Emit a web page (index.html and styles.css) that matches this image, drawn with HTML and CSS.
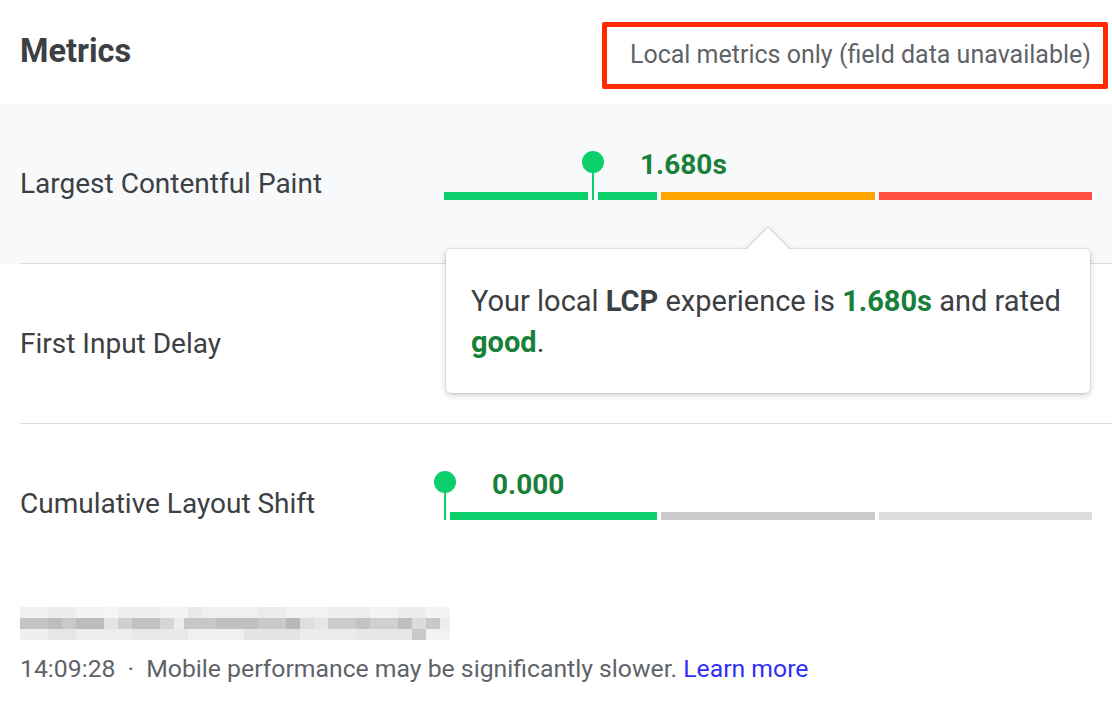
FILE: index.html
```html
<!DOCTYPE html>
<html lang="en">
<head>
<meta charset="utf-8">
<title>Metrics</title>
<link rel="stylesheet" href="styles.css">
</head>
<body>
<header class="head">
  <h1 class="title">Metrics</h1>
  <div class="note">Local metrics only (field data unavailable)</div>
</header>

<section class="metrics">
  <div class="row active">
    <div class="row-inner">
      <div class="label">Largest Contentful Paint</div>
      <div class="chart">
        <div class="bar">
          <span class="seg good"></span>
          <span class="seg ni"></span>
          <span class="seg poor"></span>
        </div>
        <div class="marker lcp">
          <div class="pin"><span class="dot"></span><span class="stem bg-gray"></span></div>
          <span class="value">1.680s</span>
        </div>
        <div class="tooltip">
          Your local <b>LCP</b> experience is <b class="ok">1.680s</b> and rated <b class="ok">good</b>.
        </div>
      </div>
    </div>
  </div>

  <div class="row">
    <div class="row-inner">
      <div class="label">First Input Delay</div>
    </div>
  </div>

  <div class="row">
    <div class="row-inner last">
      <div class="label">Cumulative Layout Shift</div>
      <div class="chart">
        <div class="bar">
          <span class="seg good"></span>
          <span class="seg empty1"></span>
          <span class="seg empty2"></span>
        </div>
        <div class="marker cls">
          <div class="pin"><span class="dot"></span><span class="stem bg-white"></span></div>
          <span class="value">0.000</span>
        </div>
      </div>
    </div>
  </div>
</section>

<footer class="foot">
  <div class="blur" aria-hidden="true"></div>
  <p class="meta">14:09:28 <span class="sep">·</span> Mobile performance may be significantly slower. <a href="#" class="link">Learn more</a></p>
</footer>
</body>
</html>
```

FILE: styles.css
```css
* { box-sizing: border-box; }

html, body {
  margin: 0;
  padding: 0;
  background: #ffffff;
}

body {
  width: 1112px;
  height: 706px;
  overflow: hidden;
  font-family: Roboto, "Noto Sans", Arial, sans-serif;
  color: #3c4043;
}

/* Header */
.head {
  height: 104px;
  display: flex;
  align-items: center;
  justify-content: space-between;
  padding: 0 4px 0 20px;
}

.title {
  margin: 0;
  font-size: 32.5px;
  font-weight: 700;
  color: #3c4043;
  line-height: 40px;
  margin-top: -2px;
}

.note {
  width: 506px;
  height: 67px;
  margin-top: 6px;
  border: 5px solid #ff2a00;
  border-radius: 2px;
  display: flex;
  align-items: center;
  justify-content: flex-end;
  padding: 0 12px 2px 0;
  font-size: 25px;
  color: #5f6368;
  white-space: nowrap;
}

/* Rows */
.row.active {
  background: #f8f9fa;
}

.row-inner {
  height: 160px;
  margin-left: 20px;
  padding-right: 20px;
  display: flex;
  align-items: center;
  border-bottom: 1px solid #dadce0;
}

.row-inner.last {
  border-bottom: none;
}

.label {
  width: 424px;
  flex: none;
  font-size: 28px;
  line-height: 34px;
  color: #3c4043;
}

.chart {
  position: relative;
  width: 648px;
  height: 66px;
  padding-bottom: 17px;
  display: flex;
  flex-direction: column;
  justify-content: flex-end;
}

.bar {
  display: flex;
  gap: 4px;
  height: 8px;
}

.seg {
  flex: 1;
  height: 8px;
}

.seg.good { background: #0cce6b; }
.seg.ni { background: #ffa400; }
.seg.poor { background: #ff4e42; }
.seg.empty1 { background: #cccccc; }
.seg.empty2 { background: #dcdcdc; }

/* Marker (overlays the bar) */
.marker {
  position: absolute;
  top: 0;
  display: flex;
  align-items: flex-start;
}

.marker.lcp { left: 138px; }
.marker.cls { left: -10px; }

.pin {
  width: 22px;
  display: flex;
  flex-direction: column;
  align-items: center;
}

.dot {
  width: 22px;
  height: 22px;
  border-radius: 50%;
  background: #0cce6b;
  position: relative;
  z-index: 2;
}

.stem {
  width: 10px;
  height: 28px;
  margin-top: -1px;
  background: #0cce6b;
  background-clip: padding-box;
  border-left: 4px solid;
  border-right: 4px solid;
}

.stem.bg-gray { border-color: #f8f9fa; }
.stem.bg-white { border-color: #ffffff; }

.value {
  margin-left: 36px;
  margin-top: 0;
  font-size: 28px;
  line-height: 28px;
  font-weight: 700;
  color: #188038;
}

/* Tooltip */
.tooltip {
  position: absolute;
  left: 2px;
  top: 98px;
  width: 644px;
  height: 144px;
  z-index: 10;
  background: #ffffff;
  border-radius: 5px;
  box-shadow: 0 0 0 1px rgba(0, 0, 0, 0.05), 0 2px 6px rgba(0, 0, 0, 0.22);
  padding: 32px 25px;
  font-size: 29px;
  line-height: 41px;
  color: #3c4043;
}

.tooltip::before {
  content: "";
  position: absolute;
  top: -15px;
  left: 307px;
  width: 30px;
  height: 30px;
  background: #ffffff;
  transform: rotate(45deg);
  box-shadow: 0 0 0 1px rgba(0, 0, 0, 0.06), 0 0 5px rgba(0, 0, 0, 0.18);
  z-index: -1;
}

.tooltip::after {
  content: "";
  position: absolute;
  top: 0;
  left: 287px;
  width: 70px;
  height: 30px;
  background: #ffffff;
}

.tooltip b { font-weight: 700; }
.tooltip .ok { color: #188038; }

/* Footer */
.foot {
  padding: 23px 20px 0 20px;
}

.blur {
  width: 430px;
  height: 33px;
  background:
    linear-gradient(to right,
      #f1f1f1 0 28px, #ececec 28px 56px, #f3f3f3 56px 84px, #f6f6f6 84px 98px,
      #eeeeee 98px 140px, #f4f4f4 140px 168px, #e9e9e9 168px 182px, #f0f0f0 182px 238px,
      #ebebeb 238px 266px, #f2f2f2 266px 308px, #eeeeee 308px 350px, #f3f3f3 350px 378px,
      #ececec 378px 406px, #f4f4f4 406px 430px) 0 0 / 100% 11px no-repeat,
    linear-gradient(to right,
      #c4c4c4 0 28px, #bdbdbd 28px 42px, #c9c9c9 42px 56px, #bcbcbc 56px 84px,
      #e4e4e4 84px 98px, #cfcfcf 98px 112px, #c2c2c2 112px 140px, #d6d6d6 140px 154px,
      #ececec 154px 164px, #c7c7c7 164px 196px, #c0c0c0 196px 238px, #c9c9c9 238px 266px,
      #b8b8b8 266px 280px, #dedede 280px 294px, #e6e6e6 294px 308px, #cccccc 308px 336px,
      #c3c3c3 336px 350px, #d0d0d0 350px 378px, #bfbfbf 378px 392px, #dcdcdc 392px 406px,
      #c8c8c8 406px 420px, #ececec 420px 430px) 0 11px / 100% 11px no-repeat,
    linear-gradient(to right,
      #efefef 0 28px, #e6e6e6 28px 56px, #ededed 56px 112px, #e8e8e8 112px 168px,
      #f0f0f0 168px 224px, #e4e4e4 224px 280px, #ececec 280px 336px, #e7e7e7 336px 392px,
      #c9c9c9 392px 406px, #f2f2f2 406px 430px) 0 22px / 100% 11px no-repeat;
}

.meta {
  margin: 13px 0 0 0;
  font-size: 24.75px;
  line-height: 32px;
  color: #5f6368;
  white-space: nowrap;
}

.sep {
  margin: 0 6px;
}

.link {
  color: #2f2ff5;
  text-decoration: none;
}
```
